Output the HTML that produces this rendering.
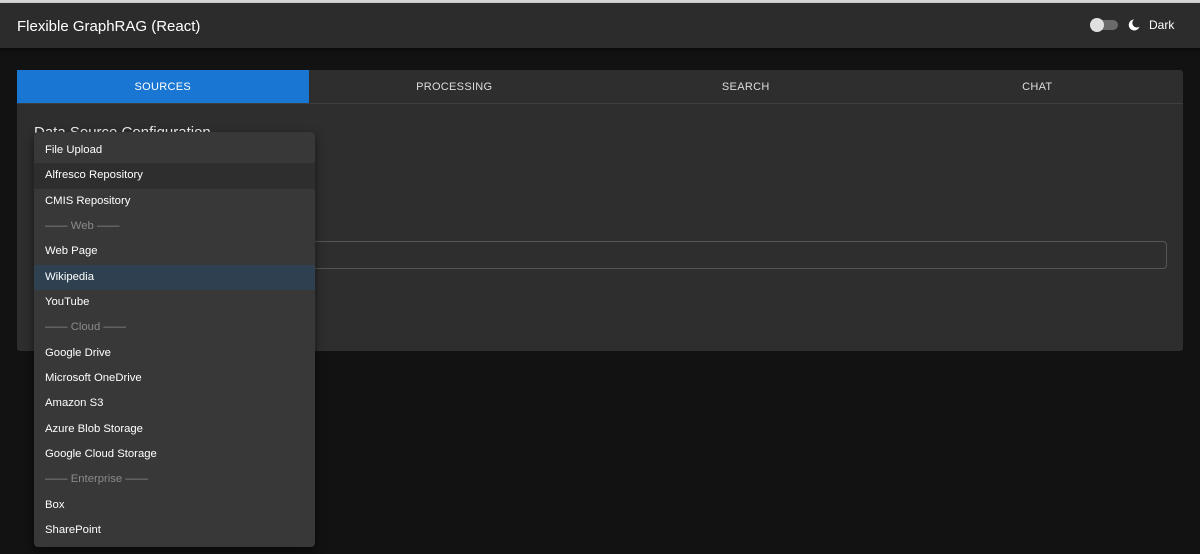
<!DOCTYPE html>
<html><head><style>
*{margin:0;padding:0;box-sizing:border-box}
body{width:1200px;height:554px;background:#121212;font-family:"Liberation Sans",sans-serif;position:relative;overflow:hidden;color:#fff}
.top{position:absolute;left:0;top:0;width:1200px;height:3px;background:#d8d8d8}
.hdr{position:absolute;left:0;top:3px;width:1200px;height:45px;background:#2c2c2c;box-shadow:0 2px 4px rgba(0,0,0,.5)}
.hdr .t{position:absolute;left:17px;top:15px;font-size:15px;color:#fff}
.sw{position:absolute;left:1092px;top:17px;width:26px;height:10px;border-radius:5px;background:#6a6a6a}
.sw i{position:absolute;left:-2px;top:-2px;width:14px;height:14px;border-radius:50%;background:#e0e0e0}
.dk{position:absolute;left:1149px;top:15px;font-size:12px;color:#fff}
.card{position:absolute;left:17px;top:70px;width:1166px;height:281px;background:#2e2e2e;border-radius:3px}
.tabs{display:flex;height:34px;border-bottom:1px solid #3e3e3e}
.tabs div{flex:1;text-align:center;font-size:11px;line-height:34px;color:#ddd;letter-spacing:.3px}
.tabs .a{background:#1976d2;color:#fff}
.h{position:absolute;left:17px;top:54px;font-size:15px;color:#eee}
.inp{position:absolute;left:290px;top:171px;width:860px;height:28px;border:1px solid #555;border-left:none;border-radius:0 4px 4px 0}
.dd{position:absolute;left:34px;top:132px;width:281px;height:415px;background:#383838;border-radius:4px;padding-top:6px;box-shadow:0 4px 10px rgba(0,0,0,.5)}
.dd div{height:25.33px;line-height:25.33px;padding-left:11px;font-size:11.3px;color:#fff}
.dd .s{background:#2e2e2e}
.dd .w{background:#2f4050}
.dd .g{color:#8a8a8a}
</style></head><body>
<div class="top"></div>
<div class="hdr"><div class="t">Flexible GraphRAG (React)</div>
<div class="sw"><i></i></div>
<svg style="position:absolute;left:1127px;top:15px" width="14" height="14" viewBox="0 0 14 14"><path d="M7 1.5A5.5 5.5 0 1 0 12.5 8.5 4.2 4.2 0 0 1 7 1.5Z" fill="#fff"/></svg>
<div class="dk">Dark</div></div>
<div class="card">
<div class="tabs"><div class="a">SOURCES</div><div>PROCESSING</div><div>SEARCH</div><div>CHAT</div></div>
<div class="h">Data Source Configuration</div>
<div class="inp"></div>
</div>
<div class="dd">
<div>File Upload</div><div class="s">Alfresco Repository</div><div>CMIS Repository</div>
<div class="g">—— Web ——</div><div>Web Page</div><div class="w">Wikipedia</div><div>YouTube</div>
<div class="g">—— Cloud ——</div><div>Google Drive</div><div>Microsoft OneDrive</div><div>Amazon S3</div><div>Azure Blob Storage</div><div>Google Cloud Storage</div>
<div class="g">—— Enterprise ——</div><div>Box</div><div>SharePoint</div>
</div>
</body></html>
